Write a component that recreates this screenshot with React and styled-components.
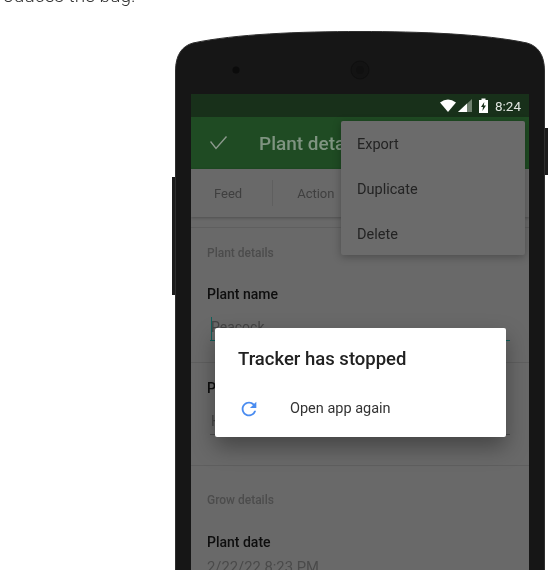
import React from 'react'
import styled, { createGlobalStyle } from 'styled-components'

const GlobalStyle = createGlobalStyle`
  html, body {
    margin: 0;
    padding: 0;
    background: #fff;
  }
  body {
    font-family: Roboto, "Open Sans", sans-serif;
  }
`

const Page = styled.div`
  width: 559px;
  height: 570px;
  overflow: hidden;
  background: #fff;
  filter: blur(0.35px);
`

const Caption = styled.p`
  margin: -15px 0 0 3px;
  height: 23px;
  font-size: 19px;
  font-weight: 300;
  line-height: 21px;
  color: #333;
`

const Device = styled.div`
  position: relative;
  width: 370px;
  margin: 23px 0 0 175px;
`

const DeviceTop = styled.svg`
  display: block;
  width: 370px;
  height: 63px;
`

const SideKey = styled.span`
  position: absolute;
  top: ${p => p.$top}px;
  ${p => p.$side}: -3px;
  width: 3px;
  height: ${p => p.$height}px;
  background: #1c1c1c;
`

const DeviceBody = styled.div`
  background: #161616;
  padding: 0 15px;
  border-left: 1px solid #2e2e2e;
  border-right: 1px solid #2e2e2e;
`

const Screen = styled.div`
  position: relative;
  height: 500px;
  overflow: hidden;
  background: #696969;
`

const StatusBar = styled.div`
  display: flex;
  align-items: center;
  justify-content: flex-end;
  height: 23px;
  padding-right: 8px;
  background: #18301a;
  color: #dfe4df;
  font-size: 13.5px;
  font-weight: 400;
`

const StatusIcons = styled.svg`
  width: 50px;
  height: 15px;
  margin-right: 7px;
`

const Toolbar = styled.div`
  display: flex;
  align-items: center;
  height: 52px;
  padding-left: 19px;
  background: #1f4b23;
`

const ToolbarTitle = styled.span`
  margin-left: 31px;
  font-size: 19px;
  font-weight: 500;
  color: #7f9481;
  white-space: nowrap;
`

const Tabs = styled.div`
  display: flex;
  align-items: center;
  height: 48px;
  background: #696969;
  box-shadow: 0 1px 3px rgba(0, 0, 0, 0.25);
  position: relative;
  font-size: 13px;
  color: #3f3f3f;
`

const Tab = styled.span`
  padding: ${p => (p.$first ? '0 30px 0 23px' : '0 0 0 24px')};
`

const TabDivider = styled.span`
  width: 1px;
  height: 26px;
  background: #5f5f5f;
`

const Card = styled.section`
  margin-top: ${p => p.$top}px;
  padding: ${p => p.$padding};
  border-top: 1px solid #5f5f5f;
`

const SectionTitle = styled.h2`
  margin: 0;
  font-size: 12px;
  line-height: 16px;
  font-weight: 500;
  color: #4c4c4c;
`

const FieldLabel = styled.div`
  margin-top: ${p => p.$top}px;
  font-size: 14px;
  line-height: 18px;
  font-weight: 500;
  color: #0e0e0e;
`

const FieldValue = styled.div`
  position: relative;
  margin: 17px 3px 0 3px;
  height: 20px;
  padding-left: 1px;
  font-size: 14px;
  line-height: 15px;
  color: #444;
  border-bottom: 1px solid ${p => (p.$active ? '#0f5a55' : '#4c4c4c')};
`

const Cursor = styled.span`
  position: absolute;
  left: 1px;
  top: -3px;
  width: 1px;
  height: 23px;
  background: #12615c;
`

const PlainValue = styled.div`
  margin-top: 7px;
  font-size: 14.8px;
  line-height: 18px;
  color: #4a4a4a;
`

const Menu = styled.div`
  position: absolute;
  top: 27px;
  right: 4px;
  width: 184px;
  height: 134px;
  padding-top: 1px;
  box-sizing: border-box;
  border-radius: 2px;
  background: #6b6b6b;
  box-shadow: 0 2px 8px rgba(0, 0, 0, 0.28);
`

const MenuItem = styled.div`
  display: flex;
  align-items: center;
  height: 45px;
  padding-left: 16px;
  font-size: 14.5px;
  color: #232323;
`

const Dialog = styled.div`
  position: absolute;
  top: 234px;
  left: 24px;
  width: 291px;
  height: 109px;
  box-sizing: border-box;
  padding: 19px 23px 0;
  border-radius: 2px;
  background: #fff;
  box-shadow: 0 10px 22px rgba(0, 0, 0, 0.35);
`

const DialogTitle = styled.h1`
  margin: 0;
  font-size: 18.5px;
  line-height: 24px;
  font-weight: 500;
  color: #212121;
`

const DialogAction = styled.div`
  display: flex;
  align-items: center;
  margin-top: 27px;
  font-size: 14.5px;
  line-height: 18px;
  color: #333;
`

const ActionIcon = styled.svg`
  width: 22px;
  height: 22px;
  margin-right: 30px;
  fill: #4a8cf0;
`

const App = () => (
  <Page>
    <GlobalStyle />
    <Caption>oduces the bug.</Caption>
    <Device>
      <SideKey $side="left" $top={146} $height={118} />
      <SideKey $side="right" $top={97} $height={47} />
      <DeviceTop viewBox="0 0 370 63">
        <path
          d="M0.5 63 L0.5 40 C0.5 24 7 15 18 12 C60 3 125 0.5 185 0.5 C245 0.5 310 3 352 12 C363 15 369.5 24 369.5 40 L369.5 63"
          fill="#161616"
          stroke="#2e2e2e"
        />
        <circle cx="61" cy="39" r="3.5" fill="#0b0b0b" />
        <circle cx="185" cy="39" r="9" fill="#131313" stroke="#0f0f0f" />
        <circle cx="185" cy="39" r="4" fill="#101010" />
      </DeviceTop>
      <DeviceBody>
        <Screen>
          <StatusBar>
            <StatusIcons viewBox="0 0 50 15">
              <path d="M2 4.5 Q10 -1.5 18 4.5 L10 14 Z" fill="#fff" />
              <path d="M20 14 L34 14 L34 1 Z" fill="#6f806f" />
              <path d="M20 14 L29 14 L29 5.5 Z" fill="#fff" />
              <path
                fillRule="evenodd"
                d="M41 2 H43.5 V0.5 H47.5 V2 H50 V15 H41 Z M46.3 4 L43 9 H45 L44.4 13 L48 7.6 H45.8 Z"
                fill="#fff"
              />
            </StatusIcons>
            8:24
          </StatusBar>
          <Toolbar>
            <svg width="18" height="18" viewBox="0 0 18 18" fill="none" stroke="#8d9a8e" strokeWidth="1.4">
              <path d="M0.5 7.5 L6 14.5 L16.5 2.5" />
            </svg>
            <ToolbarTitle>Plant details</ToolbarTitle>
          </Toolbar>
          <Tabs>
            <Tab $first>Feed</Tab>
            <TabDivider />
            <Tab>Action</Tab>
          </Tabs>
          <Card $top={10} $padding="17px 16px 0">
            <SectionTitle>Plant details</SectionTitle>
            <FieldLabel $top={24}>Plant name</FieldLabel>
            <FieldValue $active>
              <Cursor />
              Peacock
            </FieldValue>
          </Card>
          <Card $top={21} $padding="16px 16px 0">
            <FieldLabel $top={0}>Plant type</FieldLabel>
            <FieldValue>Hybrid</FieldValue>
          </Card>
          <Card $top={30} $padding="26px 16px 0">
            <SectionTitle>Grow details</SectionTitle>
            <FieldLabel $top={25}>Plant date</FieldLabel>
            <PlainValue>2/22/22 8:23 PM</PlainValue>
          </Card>
          <Menu>
            <MenuItem>Export</MenuItem>
            <MenuItem>Duplicate</MenuItem>
            <MenuItem>Delete</MenuItem>
          </Menu>
          <Dialog>
            <DialogTitle>Tracker has stopped</DialogTitle>
            <DialogAction>
              <ActionIcon viewBox="0 0 24 24">
                <path d="M17.65 6.35C16.2 4.9 14.21 4 12 4c-4.42 0-7.99 3.58-7.99 8s3.57 8 7.99 8c3.73 0 6.84-2.55 7.73-6h-2.08c-.82 2.33-3.04 4-5.65 4-3.31 0-6-2.69-6-6s2.69-6 6-6c1.66 0 3.14.69 4.22 1.78L13 11h7V4l-2.35 2.35z" />
              </ActionIcon>
              Open app again
            </DialogAction>
          </Dialog>
        </Screen>
      </DeviceBody>
    </Device>
  </Page>
)

export default App
